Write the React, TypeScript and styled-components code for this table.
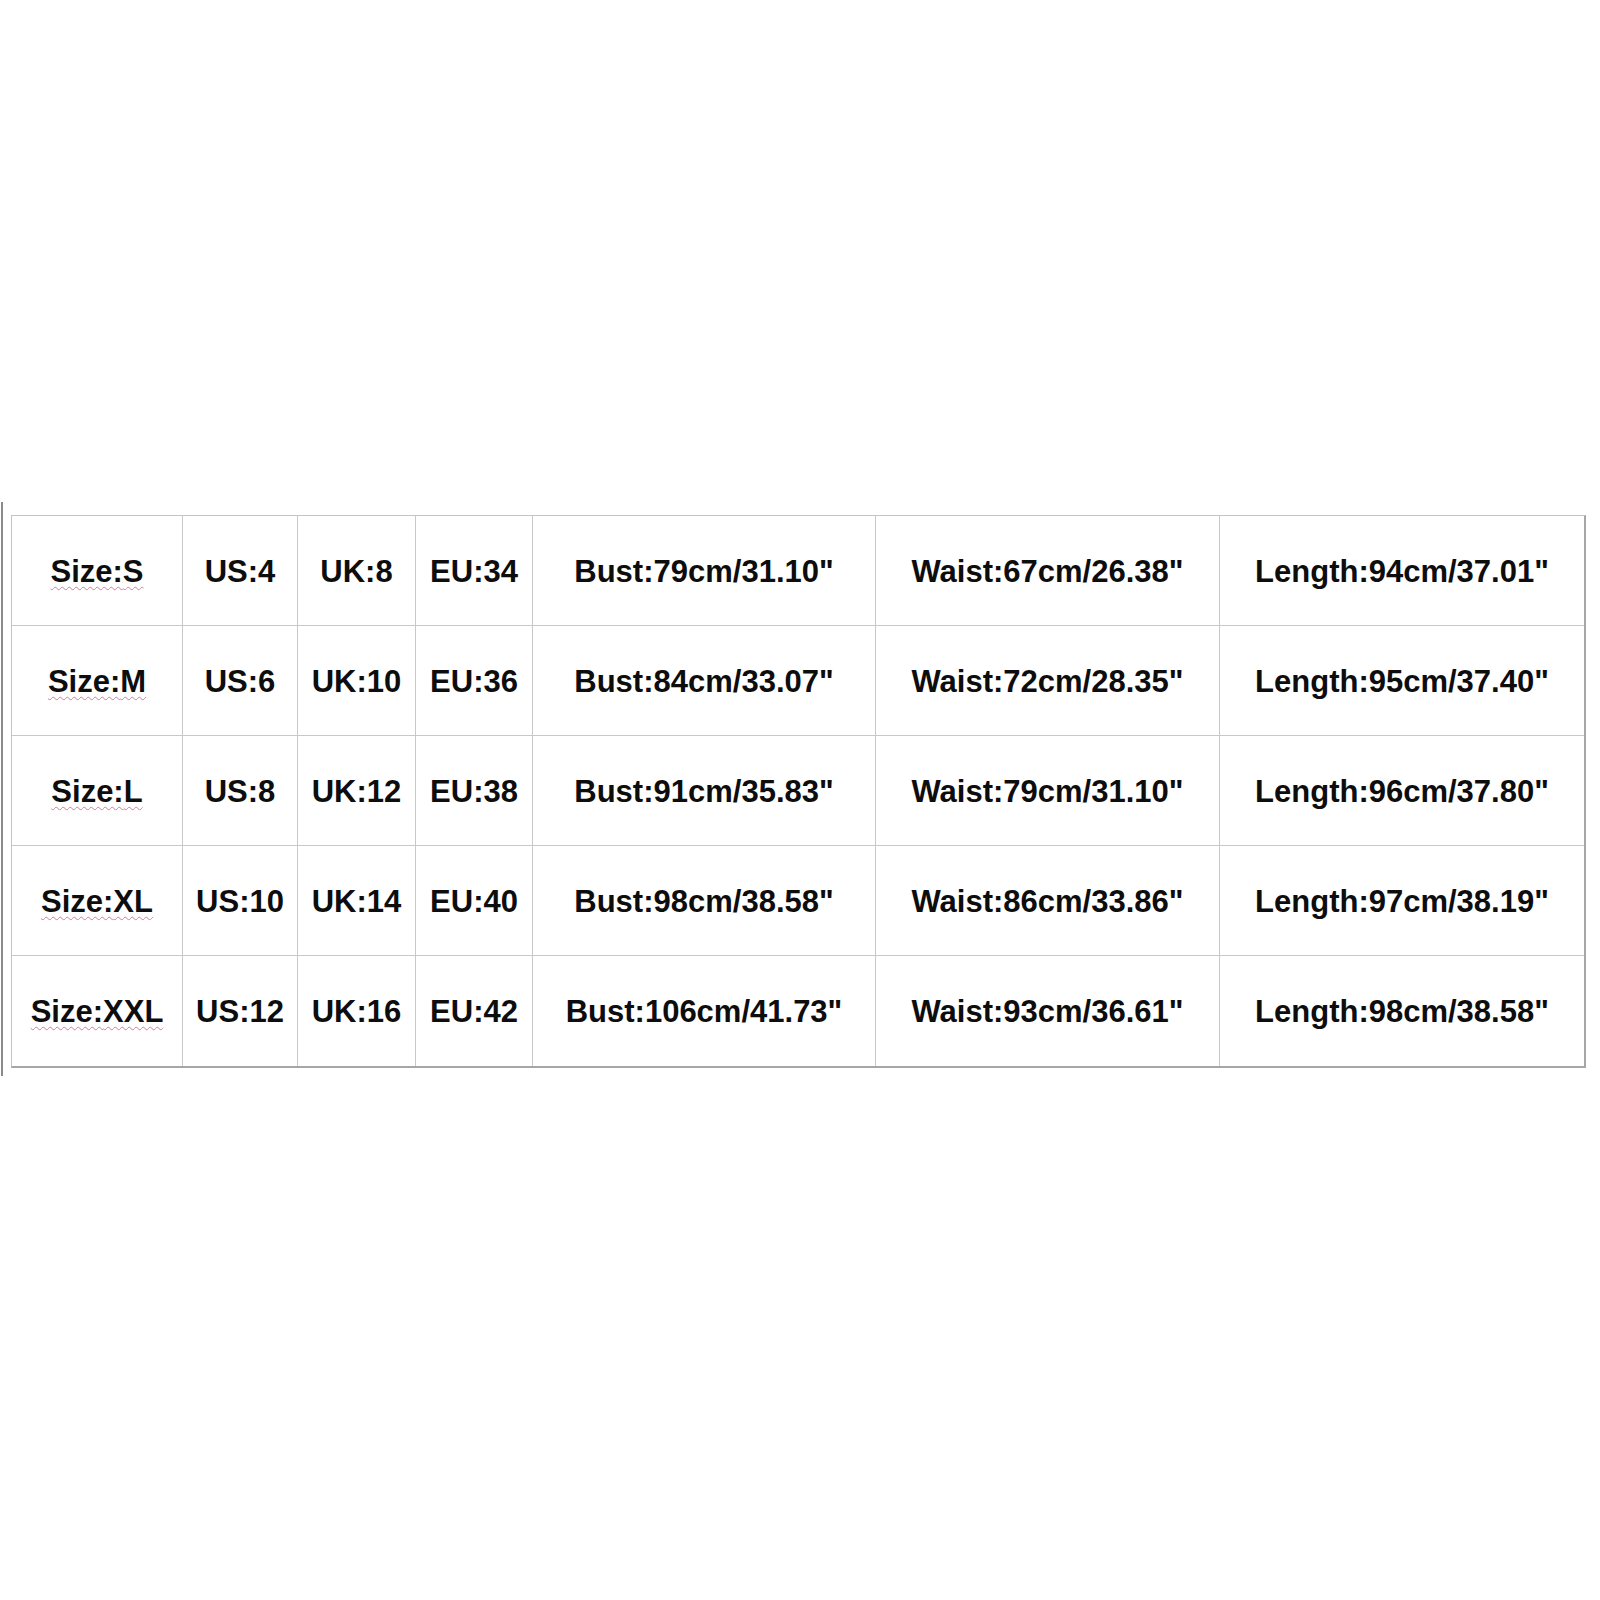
import React from "react";
import styled, { createGlobalStyle } from "styled-components";

const Global = createGlobalStyle`
  html, body {
    margin: 0;
    padding: 0;
    background: #ffffff;
  }
  body {
    font-family: "Liberation Sans", Arial, sans-serif;
  }
`;

const Page = styled.div`
  width: 1600px;
  height: 1600px;
  background: #fff;
  padding-top: 502px;
  padding-left: 1px;
  box-sizing: border-box;
`;

const Frame = styled.div`
  display: inline-block;
  border-left: 2px solid #8a8a8a;
  padding: 13px 0 8px 8px;
`;

const Grid = styled.div`
  display: grid;
  grid-template-columns: 171px 115px 118px 117px 343px 344px 364px;
  grid-auto-rows: 110px;
  border-top: 1px solid #c4c4c4;
  border-left: 1px solid #c4c4c4;
  border-right: 2px solid #a6a6a6;
  border-bottom: 2px solid #a6a6a6;
  box-sizing: content-box;
`;

const Cell = styled.div<{ $lastCol?: boolean; $lastRow?: boolean }>`
  display: flex;
  align-items: center;
  justify-content: center;
  border-right: ${(p) => (p.$lastCol ? "none" : "1px solid #c8c8c8")};
  border-bottom: ${(p) => (p.$lastRow ? "none" : "1px solid #c8c8c8")};
  font-family: "Liberation Sans", Arial, sans-serif;
  font-weight: 700;
  font-size: 31px;
  color: #0d0d0d;
  white-space: nowrap;
  padding-top: 2px;
  box-sizing: border-box;
`;

const SizeLabel = styled.span`
  text-decoration-line: underline;
  text-decoration-style: wavy;
  text-decoration-color: #cf7f9c;
  text-decoration-thickness: 1px;
  text-underline-offset: 4px;
`;

const rows = [
  ["S", "US:4", "UK:8", "EU:34", "Bust:79cm/31.10\"", "Waist:67cm/26.38\"", "Length:94cm/37.01\""],
  ["M", "US:6", "UK:10", "EU:36", "Bust:84cm/33.07\"", "Waist:72cm/28.35\"", "Length:95cm/37.40\""],
  ["L", "US:8", "UK:12", "EU:38", "Bust:91cm/35.83\"", "Waist:79cm/31.10\"", "Length:96cm/37.80\""],
  ["XL", "US:10", "UK:14", "EU:40", "Bust:98cm/38.58\"", "Waist:86cm/33.86\"", "Length:97cm/38.19\""],
  ["XXL", "US:12", "UK:16", "EU:42", "Bust:106cm/41.73\"", "Waist:93cm/36.61\"", "Length:98cm/38.58\""],
];

export default function App() {
  return (
    <>
      <Global />
      <Page>
        <Frame>
          <Grid>
            {rows.map((row, ri) =>
              row.map((val, ci) => (
                <Cell
                  key={`${ri}-${ci}`}
                  $lastCol={ci === row.length - 1}
                  $lastRow={ri === rows.length - 1}
                >
                  {ci === 0 ? <SizeLabel>Size:{val}</SizeLabel> : val}
                </Cell>
              ))
            )}
          </Grid>
        </Frame>
      </Page>
    </>
  );
}
